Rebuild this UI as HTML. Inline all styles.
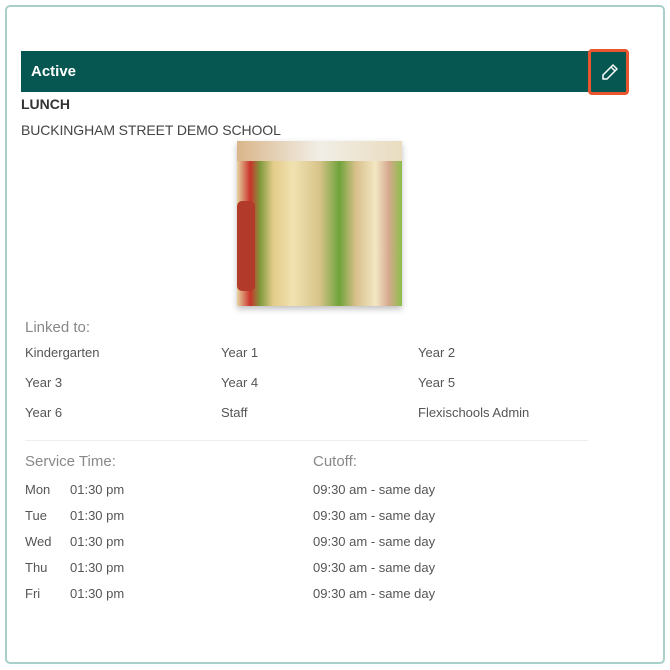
<!DOCTYPE html>
<html><head><style>
body{margin:0;width:670px;height:670px;background:#fff;font-family:"Liberation Sans",sans-serif;position:relative;overflow:hidden}
.card{position:absolute;left:5px;top:5px;width:656px;height:655px;border:2px solid #a9cfcb;border-radius:5px}
.a{position:absolute;white-space:nowrap}
.bar{position:absolute;left:21px;top:51px;width:607px;height:41px;background:#065751}
.t{font-size:13px;color:#555}
.g{font-size:15px;color:#888}
</style></head><body>
<div class="card"></div>
<div class="bar"></div>
<div class="a" style="left:31px;top:63px;color:#fff;font-weight:bold;font-size:15px">Active</div>
<div class="a" style="left:588px;top:49px;width:35px;height:40px;border:3px solid #e8552e;border-radius:4px"></div>
<svg class="a" style="left:600px;top:62px" width="20" height="20" viewBox="0 0 20 20"><path d="M13 3 L17 7 L7 17 L3 17 L3 13 Z M11 5 L15 9" fill="none" stroke="#fff" stroke-width="1.5" stroke-linejoin="round"/></svg>
<div class="a" style="left:21px;top:96px;font-weight:bold;font-size:14px;color:#333">LUNCH</div>
<div class="a" style="left:21px;top:122px;font-size:14px;color:#444;letter-spacing:-0.1px">BUCKINGHAM STREET DEMO SCHOOL</div>
<div class="a" style="left:237px;top:141px;width:165px;height:165px;box-shadow:0 3px 6px rgba(0,0,0,.25);overflow:hidden;background:linear-gradient(90deg,#e6d4a0 0%,#c9332a 8%,#7f9a3c 14%,#e4cc8a 22%,#f0e2b0 34%,#d8c48a 50%,#6fa33a 62%,#d9c08a 72%,#f2e7c4 84%,#d6a88e 92%,#8cbf4a 100%)">
<div style="position:absolute;left:0;top:0;width:165px;height:20px;background:linear-gradient(90deg,#d9b68a,#f1eee6,#e9dcc0)"></div>
<div style="position:absolute;left:0;top:60px;width:18px;height:90px;background:#b23a2a;border-radius:5px"></div>
</div>
<div class="a g" style="left:25px;top:319px">Linked to:</div>
<div class="a t" style="left:25px;top:345px">Kindergarten</div><div class="a t" style="left:221px;top:345px">Year 1</div><div class="a t" style="left:418px;top:345px">Year 2</div>
<div class="a t" style="left:25px;top:375px">Year 3</div><div class="a t" style="left:221px;top:375px">Year 4</div><div class="a t" style="left:418px;top:375px">Year 5</div>
<div class="a t" style="left:25px;top:405px">Year 6</div><div class="a t" style="left:221px;top:405px">Staff</div><div class="a t" style="left:418px;top:405px">Flexischools Admin</div>
<div class="a" style="left:25px;top:440px;width:563px;height:1px;background:#eee"></div>
<div class="a g" style="left:25px;top:453px">Service Time:</div>
<div class="a g" style="left:313px;top:453px">Cutoff:</div>
<div class="a t" style="left:25px;top:482px">Mon</div><div class="a t" style="left:70px;top:482px">01:30 pm</div><div class="a t" style="left:313px;top:482px">09:30 am - same day</div>
<div class="a t" style="left:25px;top:508px">Tue</div><div class="a t" style="left:70px;top:508px">01:30 pm</div><div class="a t" style="left:313px;top:508px">09:30 am - same day</div>
<div class="a t" style="left:25px;top:534px">Wed</div><div class="a t" style="left:70px;top:534px">01:30 pm</div><div class="a t" style="left:313px;top:534px">09:30 am - same day</div>
<div class="a t" style="left:25px;top:560px">Thu</div><div class="a t" style="left:70px;top:560px">01:30 pm</div><div class="a t" style="left:313px;top:560px">09:30 am - same day</div>
<div class="a t" style="left:25px;top:586px">Fri</div><div class="a t" style="left:70px;top:586px">01:30 pm</div><div class="a t" style="left:313px;top:586px">09:30 am - same day</div>
</body></html>
